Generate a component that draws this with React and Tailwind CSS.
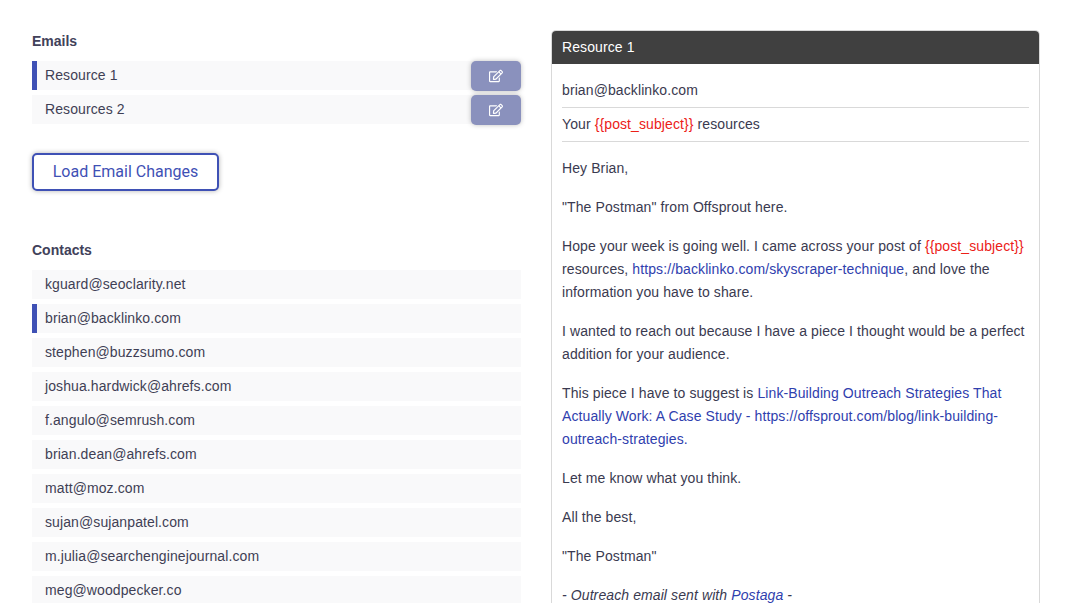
import React from "react";
import { FaRegEdit } from "react-icons/fa";

const contacts = [
  ["kguard@seoclarity.net", false],
  ["brian@backlinko.com", true],
  ["stephen@buzzsumo.com", false],
  ["joshua.hardwick@ahrefs.com", false],
  ["f.angulo@semrush.com", false],
  ["brian.dean@ahrefs.com", false],
  ["matt@moz.com", false],
  ["sujan@sujanpatel.com", false],
  ["m.julia@searchenginejournal.com", false],
  ["meg@woodpecker.co", false],
];

function Row({ label, active, edit }) {
  return (
    <div className={`relative h-[29px] shrink-0 bg-[#f9f9fa] flex items-center pr-2 ${active ? "border-l-[5px] border-[#3f51b5] pl-2" : "pl-[13px]"}`}>
      <span className="text-[14px] tracking-[0.1px] text-[#3f3f55]">{label}</span>
      {edit && (
        <button className="absolute right-0 top-0 w-[50px] h-[30px] rounded-[5px] bg-[#8a91bd] flex items-center justify-center text-white shadow-[0_0_5px_rgba(0,0,0,0.25)]">
          <FaRegEdit className="w-[14px] h-[14px]" />
        </button>
      )}
    </div>
  );
}

const Var = () => <span className="text-[#ec2018]">{"{{post_subject}}"}</span>;
const A = ({ children }) => <span className="text-[#2f40ae]">{children}</span>;

export default function App() {
  return (
    <div className="h-screen overflow-hidden bg-white flex items-start gap-[30px] pl-8 pr-[25px] pt-[30px] font-['Liberation_Sans',Arial,sans-serif] text-[#3a3a50]">
      <div className="w-[489px] shrink-0 flex flex-col">
        <h3 className="h-[22px] text-[14px] font-bold leading-[22px] text-[#41415a]">Emails</h3>
        <div className="mt-[9px] flex flex-col gap-[5px]">
          <Row label="Resource 1" active edit />
          <Row label="Resources 2" edit />
        </div>
        <button className="mt-[29px] w-[187px] h-[38px] rounded-[5px] border-2 border-[#3f51b5] bg-white text-[#3f51b5] text-[16px] font-['Roboto',sans-serif] shadow-[0_0_5px_rgba(0,0,0,0.3)]">
          Load Email Changes
        </button>
        <h3 className="mt-[48px] h-[22px] text-[14px] font-bold leading-[22px] text-[#41415a]">Contacts</h3>
        <div className="mt-[9px] flex flex-col gap-[5px]">
          {contacts.map(([c, a]) => <Row key={c} label={c} active={a} />)}
        </div>
      </div>
      <div className="w-[489px] shrink-0 border-x border-t border-[#d9d9d9] rounded-t-[5px] h-[700px]">
        <div className="h-[33px] bg-[#404040] rounded-t-[4px] flex items-center px-[10px] text-white text-[14px] tracking-[0.1px]">Resource 1</div>
        <div className="px-[10px] text-[14px] leading-[23px] tracking-[0.1px]">
          <div className="h-[44px] pt-[15px] border-b border-[#d9d9d9]">brian@backlinko.com</div>
          <div className="h-[34px] pt-[5px] border-b border-[#d9d9d9]">Your <Var /> resources</div>
          <p className="mt-[15px]">Hey Brian,</p>
          <p className="mt-[16px]">"The Postman" from Offsprout here.</p>
          <p className="mt-[16px]">Hope your week is going well. I came across your post of <Var /> resources, <A>https://backlinko.com/skyscraper-technique</A>, and love the information you have to share.</p>
          <p className="mt-[16px]">I wanted to reach out because I have a piece I thought would be a perfect addition for your audience.</p>
          <p className="mt-[16px]">This piece I have to suggest is <A>Link-Building Outreach Strategies That Actually Work: A Case Study - https://offsprout.com/blog/link-building-outreach-strategies.</A></p>
          <p className="mt-[16px]">Let me know what you think.</p>
          <p className="mt-[16px]">All the best,</p>
          <p className="mt-[16px]">"The Postman"</p>
          <p className="mt-[16px] italic">- Outreach email sent with <A>Postaga</A> -</p>
        </div>
      </div>
    </div>
  );
}
